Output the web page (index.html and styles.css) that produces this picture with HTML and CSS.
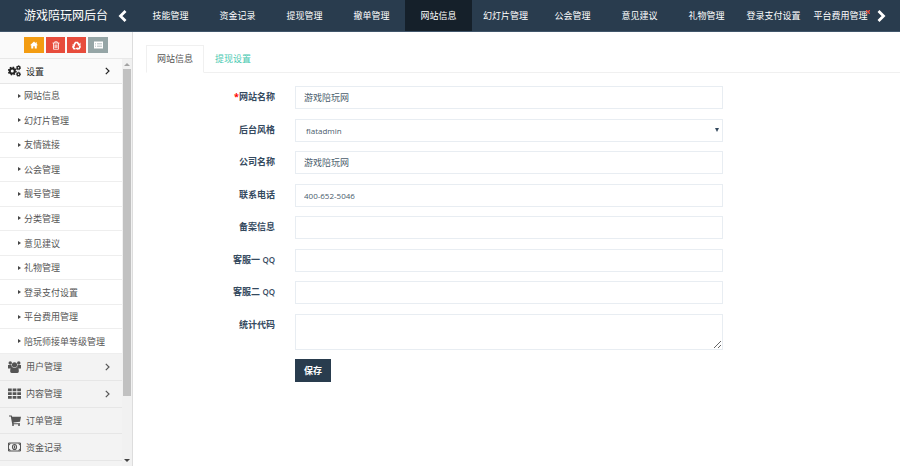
FILE: index.html
```
<!DOCTYPE html>
<html lang="zh-CN">
<head>
    <meta charset="UTF-8">
    <meta name="viewport" content="width=device-width, initial-scale=1.0">
    <title>游戏陪玩网后台</title>
    <link rel="stylesheet" href="styles.css">
</head>
<body>
    <header class="navbar">
        <div class="brand">游戏陪玩网后台</div>
        <button class="nav-arrow" type="button" aria-label="向左">
            <svg width="9" height="12" viewBox="0 0 9 12"><path d="M7.500 1 2.500 6l5 5" fill="none" stroke="#fff" stroke-width="2.800"/></svg>
        </button>
        <nav class="nav-tabs">
            <a href="#">技能管理</a>
            <a href="#">资金记录</a>
            <a href="#">提现管理</a>
            <a href="#">撤单管理</a>
            <a href="#" class="active">网站信息</a>
            <a href="#">幻灯片管理</a>
            <a href="#">公会管理</a>
            <a href="#">意见建议</a>
            <a href="#">礼物管理</a>
            <a href="#">登录支付设置</a>
            <a href="#">平台费用管理<svg class="tab-close" width="4" height="4" viewBox="0 0 4 4"><path d="M0 0l4 4M4 0 0 4" stroke="#e74c3c" stroke-width="1.300"/></svg></a>
        </nav>
        <button class="nav-arrow nav-next" type="button" aria-label="向右">
            <svg width="9" height="12" viewBox="0 0 9 12"><path d="M1.500 1l5 5-5 5" fill="none" stroke="#fff" stroke-width="2.800"/></svg>
        </button>
    </header>

    <div class="container">
        <aside class="sidebar">
            <div class="shortcuts">
                <button class="orange" type="button" aria-label="首页">
                    <svg width="8" height="8" viewBox="0 0 16 16"><path d="M8 1 0 8.500h2.500V15h4v-4.500h3V15h4V8.500H16l-2.500-2.400V2.500h-2v1.800z" fill="#fff"/></svg>
                </button>
                <button class="red" type="button" aria-label="回收站">
                    <svg width="8" height="9" viewBox="0 0 16 18"><path d="M1 4h14M5.500 4V1.500h5V4M3 4v12.500h10V4M6 7v7M8 7v7M10 7v7" fill="none" stroke="#fff" stroke-width="1.600"/></svg>
                </button>
                <button class="red" type="button" aria-label="清理缓存">
                    <svg width="9" height="9" viewBox="0 0 18 18"><path d="M4 8 7 3h4l3 5M15 9l1 3-2 3.500h-4M7 15.500H4L2 12l1-3" fill="none" stroke="#fff" stroke-width="3.400"/><path d="M17 3v6h-6zM11 12v6l-4-3zM0 7h6v5z" fill="#fff"/></svg>
                </button>
                <button class="gray" type="button" aria-label="列表">
                    <svg width="9" height="8" viewBox="0 0 18 16"><path d="M0 1h18v14H0z" fill="#fff"/><path d="M2 5h2M6 5h10M2 8h2M6 8h10M2 11h2M6 11h10" stroke="#95a5a6" stroke-width="1"/></svg>
                </button>
            </div>

            <div class="menu-area">
                <div class="menu">
                    <a href="#" class="menu-title open">
                        <svg class="icon" width="13" height="12" viewBox="0 0 26 24" fill="none" stroke="currentColor">
                            <circle cx="8.500" cy="12" r="5" stroke-width="4"/>
                            <circle cx="8.500" cy="12" r="7.500" stroke-width="3" stroke-dasharray="3 2.900"/>
                            <circle cx="21" cy="5.500" r="2.800" stroke-width="2.800"/>
                            <circle cx="21" cy="5.500" r="4.300" stroke-width="1.600" stroke-dasharray="1.900 1.500"/>
                            <circle cx="21" cy="18.500" r="2.800" stroke-width="2.800"/>
                            <circle cx="21" cy="18.500" r="4.300" stroke-width="1.600" stroke-dasharray="1.900 1.500"/>
                        </svg>
                        设置
                        <svg class="chevron" width="5" height="8" viewBox="0 0 5 8"><path d="M.8.8 4 4 .8 7.200" fill="none" stroke="currentColor" stroke-width="1.200"/></svg>
                    </a>
                    <ul class="submenu">
                        <li><a href="#">网站信息</a></li>
                        <li><a href="#">幻灯片管理</a></li>
                        <li><a href="#">友情链接</a></li>
                        <li><a href="#">公会管理</a></li>
                        <li><a href="#">靓号管理</a></li>
                        <li><a href="#">分类管理</a></li>
                        <li><a href="#">意见建议</a></li>
                        <li><a href="#">礼物管理</a></li>
                        <li><a href="#">登录支付设置</a></li>
                        <li><a href="#">平台费用管理</a></li>
                        <li><a href="#">陪玩师接单等级管理</a></li>
                    </ul>
                    <div class="menu-group">
                        <a href="#" class="menu-title">
                            <svg class="icon" width="13" height="12" viewBox="0 0 26 24" fill="currentColor">
                                <circle cx="4.500" cy="4" r="3.500"/><circle cx="21.500" cy="4" r="3.500"/><circle cx="13" cy="7.500" r="5.200"/>
                                <path d="M0 15V8h7q0 3 2 5-3 0-4 2zM26 15V8h-7q0 3-2 5 3 0 4 2zM4.500 22q-1-9 4.500-9.500 4 2 8 0 5.500.5 4.500 9.500-1 2-3 2H7.500q-2 0-3-2z"/>
                            </svg>
                            用户管理
                            <svg class="chevron" width="5" height="8" viewBox="0 0 5 8"><path d="M.8.8 4 4 .8 7.200" fill="none" stroke="currentColor" stroke-width="1.200"/></svg>
                        </a>
                        <a href="#" class="menu-title">
                            <svg class="icon" width="13" height="11" viewBox="0 0 26 22" fill="currentColor">
                                <path d="M0 1h7.500v5.500H0zM9.300 1h7.500v5.500H9.300zM18.500 1H26v5.500h-7.500zM0 8.500h7.500V14H0zM9.300 8.500h7.500V14H9.300zM18.500 8.500H26V14h-7.500zM0 16h7.500v5.500H0zM9.300 16h7.500v5.500H9.300zM18.500 16H26v5.500h-7.500z"/>
                            </svg>
                            内容管理
                            <svg class="chevron" width="5" height="8" viewBox="0 0 5 8"><path d="M.8.8 4 4 .8 7.200" fill="none" stroke="currentColor" stroke-width="1.200"/></svg>
                        </a>
                        <a href="#" class="menu-title">
                            <svg class="icon" width="13" height="11" viewBox="0 0 26 22" fill="currentColor">
                                <path d="M2 1h5.500l1 2.500H26l-2 10-13 1.500.5 1.500H24v2H8.500L5.500 3H2z"/><circle cx="10" cy="20" r="2"/><circle cx="22" cy="20" r="2"/>
                            </svg>
                            订单管理
                        </a>
                        <a href="#" class="menu-title">
                            <svg class="icon" width="13" height="10" viewBox="0 0 26 20">
                                <path d="M1 2h24v16H1z" fill="none" stroke="currentColor" stroke-width="2"/>
                                <path d="M2 3h4L2 7zM24 3h-4l4 4zM2 17h4l-4-4zM24 17h-4l4-4z" fill="currentColor"/>
                                <ellipse cx="13" cy="10" rx="4" ry="5" fill="none" stroke="currentColor" stroke-width="2.400"/><path d="M13 7v6" stroke="currentColor" stroke-width="2"/>
                            </svg>
                            资金记录
                        </a>
                    </div>
                </div>
                <div class="scrollbar">
                    <span class="arrow-up"></span>
                    <span class="thumb"></span>
                    <span class="arrow-down"></span>
                </div>
            </div>
        </aside>

        <main class="main-content">
            <div class="tabs">
                <a href="#" class="tab active">网站信息</a>
                <a href="#" class="tab">提现设置</a>
            </div>

            <form class="site-form">
                <div class="fields">
                    <div class="field">
                        <label for="siteName"><span class="required">*</span>网站名称</label>
                        <input type="text" id="siteName" value="游戏陪玩网">
                    </div>
                    <div class="field">
                        <label for="adminStyle">后台风格</label>
                        <div class="select-wrap">
                            <select id="adminStyle">
                                <option>flatadmin</option>
                            </select>
                        </div>
                    </div>
                    <div class="field">
                        <label for="company">公司名称</label>
                        <input type="text" id="company" value="游戏陪玩网">
                    </div>
                    <div class="field">
                        <label for="phone">联系电话</label>
                        <input type="text" id="phone" class="latin" value="400-652-5046">
                    </div>
                    <div class="field">
                        <label for="icp">备案信息</label>
                        <input type="text" id="icp">
                    </div>
                    <div class="field">
                        <label for="qq1">客服一 <span class="qq">QQ</span></label>
                        <input type="text" id="qq1">
                    </div>
                    <div class="field">
                        <label for="qq2">客服二 <span class="qq">QQ</span></label>
                        <input type="text" id="qq2">
                    </div>
                    <div class="field">
                        <label for="stats">统计代码</label>
                        <textarea id="stats"></textarea>
                    </div>
                </div>
                <button class="save" type="submit">保存</button>
            </form>
        </main>
    </div>
</body>
</html>
```
FILE: styles.css
```
* {
    margin: 0;
    padding: 0;
    box-sizing: border-box;
}

body {
    display: flex;
    flex-direction: column;
    height: 100vh;
    overflow: hidden;
    background: #fff;
    color: #34495e;
    font-family: "Open Sans", "Noto Sans CJK SC", sans-serif;
    font-size: 9px;
}

a {
    color: inherit;
    text-decoration: none;
}

button {
    border: none;
    cursor: pointer;
}

svg {
    display: block;
}

/* top bar */
.navbar {
    display: flex;
    flex: none;
    height: 32px;
    background: #293c4e;
    border-bottom: 1px solid #41566b;
    color: #fff;
}

.brand {
    padding-left: 24px;
    font-size: 12px;
    line-height: 31px;
    white-space: nowrap;
}

.nav-arrow {
    display: flex;
    flex: none;
    align-items: center;
    justify-content: center;
    width: 29px;
    background: none;
}

.nav-next {
    width: 26px;
    padding-right: 12px;
}

.nav-tabs {
    display: flex;
    flex: 1;
}

.nav-tabs a {
    position: relative;
    flex: 1 1 0;
    line-height: 31px;
    text-align: center;
    white-space: nowrap;
}

.nav-tabs .active {
    background: #15202a;
}

.tab-close {
    position: absolute;
    top: 10px;
    right: 4px;
}

.container {
    display: flex;
    flex: 1;
    min-height: 0;
}

/* sidebar */
.sidebar {
    display: flex;
    flex-direction: column;
    flex: none;
    width: 133px;
    background: #f3f3f3;
    border-right: 1px solid #ddd;
}

.shortcuts {
    display: flex;
    flex: none;
    justify-content: center;
    gap: 2px;
    height: 27px;
    padding: 5px 0;
    background: #fafafa;
    border-bottom: 1px solid #e8e8e8;
}

.shortcuts button {
    display: flex;
    align-items: center;
    justify-content: center;
    width: 20px;
    height: 16px;
}

.shortcuts .orange {
    background: #f39c12;
}

.shortcuts .red {
    width: 19px;
    background: #e74c3c;
}

.shortcuts .gray {
    background: #95a5a6;
}

.menu-area {
    display: flex;
    flex: 1;
    min-height: 0;
}

.menu {
    flex: 1;
    overflow: hidden;
    color: #555;
}

.menu-title {
    display: flex;
    align-items: center;
    padding: 0 12px 0 8px;
    border-bottom: 1px solid #e6e6e6;
}

.menu-title .icon {
    margin-right: 5px;
}

.menu-title .chevron {
    margin-left: auto;
}

.menu-title.open {
    height: 25px;
    background: #fafafa;
    color: #222;
}

.submenu {
    display: grid;
    grid-auto-rows: 1fr;
    height: 270px;
    background: #fff;
    list-style: none;
}

.submenu a {
    display: flex;
    align-items: center;
    height: 100%;
    padding-left: 18px;
    border-bottom: 1px solid #eee;
}

.submenu a::before {
    content: "";
    margin-right: 3px;
    border-left: 3px solid #444;
    border-top: 2px solid transparent;
    border-bottom: 2px solid transparent;
}

.menu-group {
    display: grid;
    grid-auto-rows: 1fr;
    height: 107px;
}

.scrollbar {
    display: flex;
    flex: none;
    flex-direction: column;
    align-items: center;
    width: 10px;
    padding: 4px 0;
    background: #f1f1f1;
}

.thumb {
    width: 8px;
    height: 327px;
    margin-top: 3px;
    background: #c1c1c1;
}

.arrow-up,
.arrow-down {
    border-left: 3px solid transparent;
    border-right: 3px solid transparent;
}

.arrow-up {
    border-bottom: 3px solid #a3a3a3;
}

.arrow-down {
    margin-top: auto;
    border-top: 3px solid #444;
}

/* content */
.main-content {
    flex: 1;
    min-width: 0;
    padding: 13px 0 0 13px;
}

.tabs {
    display: flex;
    height: 28px;
    border-bottom: 1px solid #f0f0f0;
}

.tab {
    height: 28px;
    padding: 0 10px;
    border: 1px solid transparent;
    color: #48c9b0;
    line-height: 26px;
}

.tab.active {
    background: #fff;
    border-color: #f0f0f0;
    border-bottom-color: #fff;
    color: #555;
}

.site-form {
    padding: 13px 4px 0 0;
}

.fields {
    display: flex;
    flex-direction: column;
    justify-content: space-between;
    height: 264px;
}

.field {
    display: grid;
    grid-template-columns: 129px 57%;
    column-gap: 20px;
    align-items: start;
}

.field label {
    font-weight: bold;
    line-height: 22px;
    text-align: right;
}

.required {
    color: #f00;
}

.qq {
    font-weight: 600;
    font-size: 8px;
}

.field input,
.field select,
.field textarea {
    display: block;
    width: 100%;
    height: 23px;
    padding: 0 8px;
    background: #fff;
    border: 1px solid #e8edf2;
    border-radius: 0;
    outline: none;
    color: #4a5c6c;
    font: inherit;
}

.select-wrap {
    position: relative;
}

.select-wrap::after {
    content: "";
    position: absolute;
    top: 9px;
    right: 4px;
    border-top: 4px solid #34495e;
    border-left: 2px solid transparent;
    border-right: 2px solid transparent;
}

.field select {
    padding-left: 10px;
    appearance: none;
    font-size: 8px;
}

.field .latin {
    font-size: 8px;
}

.field textarea {
    height: 36px;
    resize: vertical;
}

.save {
    display: block;
    width: 36px;
    height: 23px;
    margin: 9px 0 0 149px;
    background: #293c4e;
    color: #fff;
    font: inherit;
    font-weight: bold;
}
```
